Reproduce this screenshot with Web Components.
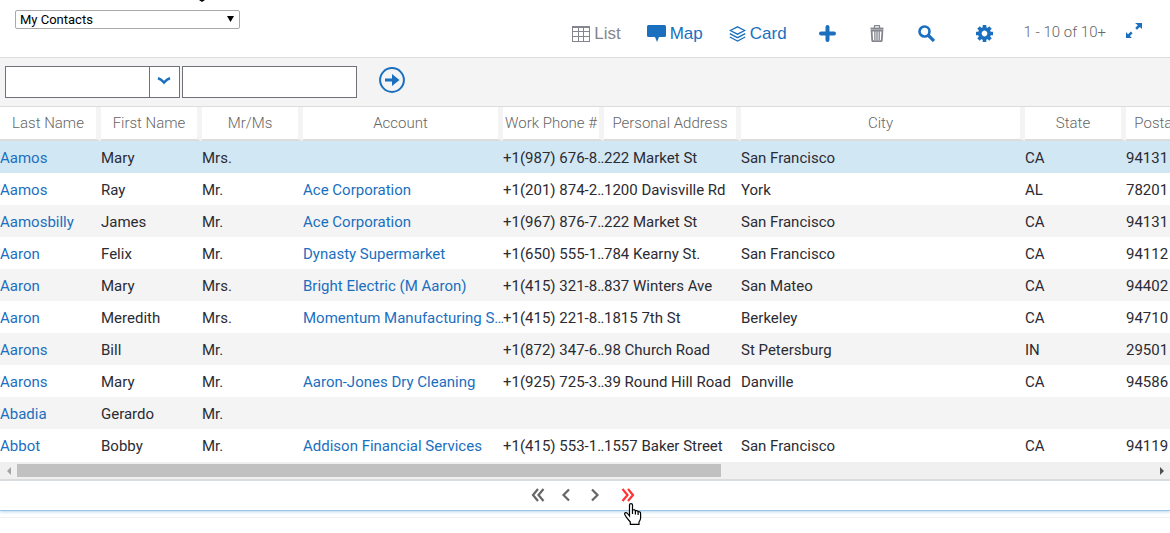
<!DOCTYPE html>
<html lang="en">
<head>
<meta charset="utf-8">
<title>My Contacts</title>
<style>
body { margin: 0; min-height: 100vh; background: #fff; font-family: Roboto, "Liberation Sans", sans-serif; font-size: 15px; color: #2b2b33; }
</style>
</head>
<body>
<contact-applet></contact-applet>
<script>
const define = (name, template, init) => customElements.define(name, class extends HTMLElement {
  connectedCallback() {
    if (this.shadowRoot) return;
    const root = this.attachShadow({ mode: 'open' });
    root.innerHTML = typeof template === 'function' ? template(this) : template;
    if (init) init(root);
  }
});

const icons = {
  grid: '<svg width="18" height="16" viewBox="0 0 18 16" fill="none" stroke="currentColor"><path d="M.5 1h17M.5 5.500h17M.5 10.500h17M.5 15.500h17M.5 1v15M6.500 1v15M11.500 1v15M17.500 1v15"/><path d="M0 1h18" stroke-width="2"/></svg>',
  map: '<svg width="19" height="17" viewBox="0 0 19 17" fill="currentColor"><path d="M1.500 0h16q1.500 0 1.500 1.500v9q0 1.500-1.500 1.500H12l-2 5-2-5H1.500Q0 12 0 10.500v-9Q0 0 1.500 0z"/></svg>',
  card: '<svg width="17" height="16" viewBox="0 0 17 16" fill="none" stroke="currentColor" stroke-width="1.300"><path d="M8.500.8l7.200 3.700-7.200 3.700-7.200-3.700zM.8 7.700l7.700 4 7.700-4M.8 11l7.700 4 7.700-4"/></svg>',
  plus: '<svg width="17" height="17" viewBox="0 0 17 17" stroke="currentColor" stroke-width="4" stroke-linecap="round"><path d="M8.500 2v13M2 8.500h13"/></svg>',
  trash: '<svg width="14" height="17" viewBox="0 0 14 17" fill="none" stroke="currentColor"><path d="M.5 3.500h13" stroke-width="1.800"/><path d="M4.500 3V1q0-.4.5-.4h4q.5 0 .5.400V3" stroke-width="1.300"/><path d="M1.600 5.500h10.800l-.6 9.700q0 1-1 1H3.200q-1 0-1-1z" stroke-width="1.800"/><path d="M4.900 6v9M7 6v9M9.200 6v9" stroke-width="1.300"/></svg>',
  search: '<svg width="17" height="17" viewBox="0 0 17 17" fill="none" stroke="currentColor"><circle cx="6.500" cy="6.500" r="5" stroke-width="2.600"/><path d="M10 10l6 6" stroke-width="3.200"/></svg>',
  gear: '<svg width="17" height="17" viewBox="-8.500 -8.500 17 17" fill="none" stroke="currentColor"><circle r="4.700" stroke-width="3.600"/><path stroke-width="3.600" d="M0-8.500v3M0 8.500v-3M-8.500 0h3M8.500 0h-3M-6-6l2 2M6 6l-2-2M-6 6l2-2M6-6l-2 2"/></svg>',
  expand: '<svg width="16" height="16" viewBox="0 0 16 16" fill="currentColor"><path d="M9 0h7v6l-2.200-2.100L11 6.800 9.200 5l2.700-2.800zM0 9l2.100 2.200 2.800-2.700 1.700 1.700-2.700 2.800L6 15H0z"/></svg>',
  chevron: '<svg width="14" height="8" viewBox="0 0 14 8" fill="none" stroke="currentColor" stroke-width="2.600"><path d="M1 1.200Q4 2 7 5.500Q10 2 13 1.200"/></svg>',
  go: '<svg width="26" height="26" viewBox="0 0 26 26"><circle cx="13" cy="13" r="11.900" fill="none" stroke="currentColor" stroke-width="2"/><path d="M6 11.500h7V7l7.500 6-7.500 6v-4.500H6z" fill="currentColor"/></svg>',
  first: '<svg width="14" height="14" viewBox="0 0 14 14"><path d="M7 1L2 7l5 6M12.500 1l-5 6 5 6"/></svg>',
  prev: '<svg width="10" height="14" viewBox="0 0 10 14"><path d="M8 1.500L2.500 7l5.500 5.500"/></svg>',
  next: '<svg width="10" height="14" viewBox="0 0 10 14"><path d="M2 1.500L7.500 7l-5.500 5.500"/></svg>',
  last: '<svg width="14" height="14" viewBox="0 0 14 14"><path d="M1.500 1l5 6-5 6M7 1l5 6-5 6"/></svg>'
};

define('applet-icon', el => `<style>:host{display:inline-flex;flex:none}svg{display:block}</style>${icons[el.getAttribute('name')]}`);

define('tool-button', el => `<style>
:host{display:block;flex:none;color:#1a6fbf}
:host([muted]){color:#84868e}
button{display:flex;align-items:center;margin:0;padding:0;border:0;background:none;color:inherit;font:17px/20px "Liberation Sans",sans-serif;cursor:pointer}
.text{margin-left:4px}
</style><button aria-label="${el.getAttribute('label')}"><applet-icon name="${el.getAttribute('icon')}"></applet-icon>${el.hasChildNodes() ? '<span class="text"><slot></slot></span>' : ''}</button>`);

define('applet-header', `<style>
:host{display:flex;justify-content:space-between;height:57px;border-bottom:1px solid #dcdcdc;position:relative}
select{appearance:none;width:225px;height:19px;margin:10px 0 0 15px;padding:0 4px;border:1px solid #a9a9a9;border-radius:2px;color:#000;
 font:13px/17px Roboto,sans-serif;background:#fff}
.pick{position:relative;height:29px}
.pick svg{position:absolute;right:6px;top:16px;pointer-events:none}
.tip{position:absolute;left:199px;top:0}
nav{display:flex;align-items:center;padding:10px 28px 0 0}
.list,.map{margin-right:26px}
.card{margin-right:32px}
.plus,.trash{margin-right:34px}
.search{margin-right:41px}
.gear{margin-right:31px}
.expand{margin:0 0 6px 20px}
.count{font:300 15px/20px Roboto,sans-serif;color:#666;margin-bottom:4px;white-space:nowrap}
</style>
<svg class="tip" width="6" height="2" aria-hidden="true"><path d="M0 0h6L3 2z"/></svg>
<div class="pick"><select aria-label="Saved queries"><option>My Contacts</option></select>
<svg width="7" height="6" aria-hidden="true"><path d="M0 0h7L3.500 6z"/></svg></div>
<nav aria-label="Contact views">
<tool-button class="list" muted icon="grid" label="List">List</tool-button>
<tool-button class="map" icon="map" label="Map">Map</tool-button>
<tool-button class="card" icon="card" label="Card">Card</tool-button>
<tool-button class="plus" icon="plus" label="New"></tool-button>
<tool-button class="trash" muted icon="trash" label="Delete"></tool-button>
<tool-button class="search" icon="search" label="Query"></tool-button>
<tool-button class="gear" icon="gear" label="Settings"></tool-button>
<span class="count">1 - 10 of 10+</span>
<tool-button class="expand" icon="expand" label="Maximize"></tool-button>
</nav>`);

define('find-bar', `<style>
:host{display:flex;align-items:center;height:48px;padding-left:5px;background:#f4f4f4;border-bottom:1px solid #dcdcdc}
.combo,input,button{box-sizing:border-box;margin:0}
.combo{display:flex;width:175px;height:32px;border:1px solid #6f727b;background:#fff;margin-right:2px}
.combo input{flex:1;min-width:0;border:0;height:30px}
.combo button{width:30px;padding:0 2px 2px 0;border:0;border-left:1px solid #6f727b;background:none;display:flex;align-items:center;justify-content:center}
input{height:32px;padding:0 6px;border:1px solid #6f727b;background:#fff;font:15px Roboto,sans-serif}
.value{width:175px}
button{color:#1a6fbf}
.go{display:flex;border:0;padding:0 0 4px;margin-left:22px;background:none}
</style>
<div class="combo"><input aria-label="Find field"><button aria-label="Open field list"><applet-icon name="chevron"></applet-icon></button></div>
<input class="value" aria-label="Starting with">
<button class="go" aria-label="Go"><applet-icon name="go"></applet-icon></button>`);

const columns = [['Last Name',101],['First Name',101],['Mr/Ms',101],['Account',200],['Work Phone #',101],['Personal Address',137],['City',284],['State',101],['Postal Code',101]];
const rows = [
['Aamos','Mary','Mrs.','','+1(987) 676-8…','222 Market St','San Francisco','CA','94131'],
['Aamos','Ray','Mr.','Ace Corporation','+1(201) 874-2…','1200 Davisville Rd','York','AL','78201'],
['Aamosbilly','James','Mr.','Ace Corporation','+1(967) 876-7…','222 Market St','San Francisco','CA','94131'],
['Aaron','Felix','Mr.','Dynasty Supermarket','+1(650) 555-1…','784 Kearny St.','San Francisco','CA','94112'],
['Aaron','Mary','Mrs.','Bright Electric (M Aaron)','+1(415) 321-8…','837 Winters Ave','San Mateo','CA','94402'],
['Aaron','Meredith','Mrs.','Momentum Manufacturing S…','+1(415) 221-8…','1815 7th St','Berkeley','CA','94710'],
['Aarons','Bill','Mr.','','+1(872) 347-6…','98 Church Road','St Petersburg','IN','29501'],
['Aarons','Mary','Mr.','Aaron-Jones Dry Cleaning','+1(925) 725-3…','39 Round Hill Road','Danville','CA','94586'],
['Abadia','Gerardo','Mr.','','','','','',''],
['Abbot','Bobby','Mr.','Addison Financial Services','+1(415) 553-1…','1557 Baker Street','San Francisco','CA','94119']];

define('contact-table', `<style>
:host{display:block;overflow:hidden}
table{table-layout:fixed;border-collapse:separate;border-spacing:0;width:1227px;min-width:100%}
th,td{padding:0;overflow:hidden;white-space:nowrap;text-overflow:clip}
th{line-height:32px;font-weight:300;color:#666;text-align:center;border-right:5px solid #f4f4f4;border-bottom:2px solid #dcdcdc}
td{padding-top:2px;line-height:30px}
tbody tr:nth-child(odd){background:#f4f4f4}
tbody tr:first-child{background:#d2e7f4}
a{color:#1a6fbf;text-decoration:none}
</style><table><colgroup></colgroup><thead><tr></tr></thead><tbody></tbody></table>`,
  root => {
    root.querySelector('colgroup').innerHTML = columns.map(c => `<col style="width:${c[1]}px">`).join('');
    root.querySelector('thead tr').innerHTML = columns.map(c => `<th scope="col">${c[0]}</th>`).join('');
    root.querySelector('tbody').innerHTML = rows.map(r => '<tr>' + r.map((v, i) =>
      `<td>${v && (i === 0 || i === 3) ? `<a href="#">${v}</a>` : v}</td>`).join('') + '</tr>').join('');
  });

define('scroll-track', `<style>
:host{display:flex;height:17px;margin-top:1px;align-items:center;background:#f0f0f0;border-bottom:2px solid #dcdcdc}
.end{flex:none;width:17px;display:flex;justify-content:center}
.track{flex:1}
.thumb{width:62%;height:13px;background:#c1c1c1}
</style>
<span class="end"><svg width="4" height="8"><path d="M4 0v8L0 4z" fill="#a3a3a3"/></svg></span>
<div class="track"><div class="thumb"></div></div>
<span class="end"><svg width="4" height="8"><path d="M0 0v8l4-4z" fill="#505050"/></svg></span>`);

define('record-pager', `<style>
:host{display:flex;justify-content:center;height:29px;padding-right:4px;border-bottom:1px solid #9cc5e5;box-shadow:0 1px 3px #b7d9ef}
button{display:flex;align-items:center;position:relative;border:0;margin:0;padding:0 8px 2px;background:none;color:#666}
applet-icon{stroke:currentColor;stroke-width:2.200px;fill:none}
.next{margin-left:3px}
.last{margin-left:5px;color:#f33}
.hand{position:absolute;left:11px;top:22px;overflow:visible}
</style>
<button aria-label="First"><applet-icon name="first"></applet-icon></button>
<button aria-label="Previous"><applet-icon name="prev"></applet-icon></button>
<button class="next" aria-label="Next"><applet-icon name="next"></applet-icon></button>
<button class="last" aria-label="Last"><applet-icon name="last"></applet-icon>
<svg class="hand" width="18" height="22" viewBox="0 0 18 22" fill="#fff" stroke="#000" stroke-width="1.200"><path d="M5.500 13V2q0-1.400 1.500-1.400T8.500 2v5q2.500-.8 2.900.8 2.300-.6 2.700.9 2.500-.3 2.500 1.800V15q0 2-1.600 4v2.300H6.300V19L2.500 14.500.8 11.500q-.5-1.500.8-1.900 1.400-.2 2.400 1.400l1.500 2z"/><path d="M8.500 7v4M11.400 8v3.500M14.100 9v3" fill="none"/></svg></button>`);

define('contact-applet', `<style>
:host{display:block}
footer{height:6px;border-bottom:1px solid #f0f0f0}
</style>
<applet-header></applet-header><find-bar></find-bar><contact-table></contact-table>
<scroll-track></scroll-track><record-pager></record-pager><footer></footer>`);
</script>
</body>
</html>
